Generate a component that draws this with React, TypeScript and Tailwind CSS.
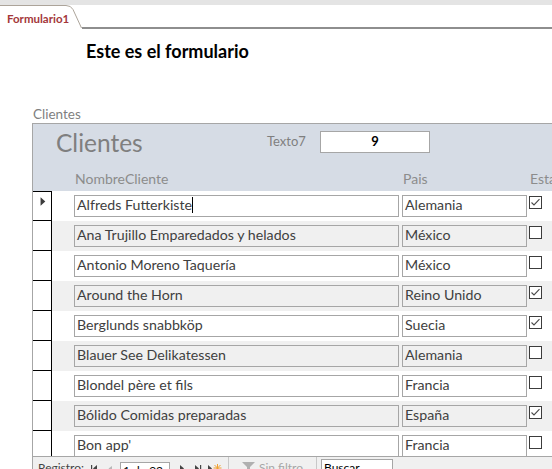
import React from "react";

type Row = { name: string; pais: string; checked: boolean };

const rows: Row[] = [
  { name: "Alfreds Futterkiste", pais: "Alemania", checked: true },
  { name: "Ana Trujillo Emparedados y helados", pais: "México", checked: false },
  { name: "Antonio Moreno Taquería", pais: "México", checked: false },
  { name: "Around the Horn", pais: "Reino Unido", checked: true },
  { name: "Berglunds snabbköp", pais: "Suecia", checked: true },
  { name: "Blauer See Delikatessen", pais: "Alemania", checked: false },
  { name: "Blondel père et fils", pais: "Francia", checked: false },
  { name: "Bólido Comidas preparadas", pais: "España", checked: true },
  { name: "Bon app'", pais: "Francia", checked: false },
];

function CheckBox({ checked }: { checked: boolean }) {
  return (
    <svg width="13" height="13" viewBox="0 0 13 13" className="shrink-0 mt-[5px] ml-[2px]">
      <rect x="0.5" y="0.5" width="12" height="12" fill="#ffffff" stroke="#3c3c3c" />
      {checked && (
        <path d="M2.5 6.5 L5 9 L10.5 3.2" fill="none" stroke="#4a4a4a" strokeWidth="1.1" />
      )}
    </svg>
  );
}

export default function App() {
  return (
    <div className="w-[552px] h-[469px] overflow-hidden bg-white font-['Lato',sans-serif] text-[#404040]">
      {/* Tab bar */}
      <div className="h-[5px] bg-[#e4e4e4]" />
      <div className="flex h-[24px]">
        <div className="w-[66px] shrink-0 border-t border-[#aca49a] pl-[7px] pt-[7px] text-[11.5px] font-bold leading-none text-[#a4373a]">
          Formulario1
        </div>
        <svg width="16" height="24" viewBox="0 0 16 24" className="shrink-0">
          <path d="M0 0.5 Q5 0.5 7 4.5 L15.5 23" fill="none" stroke="#aca49a" strokeWidth="1" />
        </svg>
        <div className="flex-1 border-b-2 border-[#8e8e8e]" />
      </div>

      {/* Title */}
      <div className="h-[77px] pl-[86px] pt-[13px]">
        <div className="text-[18px] font-bold leading-none text-black">Este es el formulario</div>
      </div>

      {/* Subform label */}
      <div className="h-[17px] pl-[33px] text-[13.5px] leading-[17px] text-[#7f7f7f]">Clientes</div>

      {/* Subform */}
      <div className="ml-[32px] w-[560px] border-l border-t border-[#a6a6a6]">
        {/* Header */}
        <div className="h-[67px] bg-[#d6dce5]">
          <div className="flex h-[46px] items-start">
            <div className="w-[234px] shrink-0 pl-[23px] mt-[4px] text-[24.5px] leading-[30px] text-[#7f7f7f]">
              Clientes
            </div>
            <div className="w-[53px] shrink-0 mt-[9px] text-[13px] leading-[16px] text-[#7f7f7f]">Texto7</div>
            <div className="mt-[7px] flex h-[22px] w-[110px] shrink-0 items-center justify-center border border-[#a6a6a6] bg-white text-[13px] font-bold text-black">
              9
            </div>
          </div>
          <div className="flex h-[21px] items-start text-[14px] leading-[17px] text-[#8c8c8c]">
            <div className="w-[42px] shrink-0" />
            <div className="w-[328px] shrink-0">NombreCliente</div>
            <div className="w-[127px] shrink-0">Pais</div>
            <div className="shrink-0">Estado</div>
          </div>
        </div>

        {/* Rows */}
        <div className="h-[265px] overflow-hidden">
          {rows.map((r, i) => (
            <div key={i} className={`flex h-[30px] ${i % 2 === 1 ? "bg-[#f0f0f0]" : "bg-white"}`}>
              <div
                className={`flex h-[30px] w-[19px] shrink-0 items-start border-r border-b border-black bg-white ${
                  i === 0 ? "border-t" : ""
                }`}
              >
                {i === 0 && (
                  <svg width="19" height="14" viewBox="0 0 19 14" className="mt-[4px]">
                    <path d="M8 1 L13 5.5 L8 10 Z" fill="#3c3c3c" />
                  </svg>
                )}
              </div>
              <div className="ml-[22px] mt-[4px] flex h-[22px] w-[325px] shrink-0 items-start border border-[#a6a6a6] pl-[2px] text-[14.2px] leading-[18px] whitespace-nowrap overflow-hidden">
                <span>{r.name}</span>
                {i === 0 && <span className="mt-[1px] inline-block h-[16px] w-px bg-black" />}
              </div>
              <div className="ml-[3px] mt-[4px] flex h-[22px] w-[125px] shrink-0 items-start border border-[#a6a6a6] pl-[2px] text-[14.2px] leading-[18px] whitespace-nowrap">
                {r.pais}
              </div>
              <CheckBox checked={r.checked} />
            </div>
          ))}
        </div>

        {/* Navigation bar */}
        <div className="flex h-[30px] items-start border-t border-[#a6a6a6] bg-[#f0f0f0] text-[12px] leading-[14px]">
          <div className="mt-[4px] ml-[5px] w-[52px] shrink-0 text-[#444]">Registro:</div>
          <svg width="30" height="14" viewBox="0 0 30 14" className="mt-[6px] shrink-0">
            <rect x="1" y="2" width="1.2" height="7" fill="#444" />
            <path d="M7 2 L3 5.5 L7 9 Z" fill="#444" />
            <path d="M22 3 L18.5 5.5 L22 8 Z" fill="#b8b8b8" />
          </svg>
          <div className="mt-[5px] h-[20px] w-[50px] shrink-0 border border-[#a6a6a6] bg-white pl-[2px] text-[12px] leading-[16px] text-black">
            1 de 92
          </div>
          <svg width="58" height="14" viewBox="0 0 58 14" className="mt-[6px] shrink-0">
            <path d="M10 2 L14 5.5 L10 9 Z" fill="#444" />
            <path d="M25 2 L29 5.5 L25 9 Z" fill="#444" />
            <rect x="30" y="2" width="1.2" height="7" fill="#444" />
            <path d="M38 2 L42 5.5 L38 9 Z" fill="#444" />
            <g stroke="#f0a030" strokeWidth="1">
              <line x1="47.5" y1="1" x2="47.5" y2="9" />
              <line x1="43.5" y1="5" x2="51.5" y2="5" />
              <line x1="44.5" y1="2" x2="50.5" y2="8" />
              <line x1="50.5" y1="2" x2="44.5" y2="8" />
            </g>
          </svg>
          <div className="h-[30px] w-px shrink-0 bg-[#c8c8c8]" />
          <svg width="30" height="14" viewBox="0 0 30 14" className="mt-[4px] shrink-0">
            <path d="M13 1 L26 1 L21 6 L21 12 L18 12 L18 6 Z" fill="#b0b0b0" />
          </svg>
          <div className="mt-[4px] w-[57px] shrink-0 text-[#a6a6a6]">Sin filtro</div>
          <div className="h-[30px] w-px shrink-0 bg-[#c8c8c8]" />
          <div className="ml-[4px] mt-[2px] h-[20px] w-[72px] shrink-0 border border-[#a6a6a6] bg-white pl-[2px] text-[12px] leading-[16px] text-black">
            Buscar
          </div>
        </div>
      </div>
    </div>
  );
}
